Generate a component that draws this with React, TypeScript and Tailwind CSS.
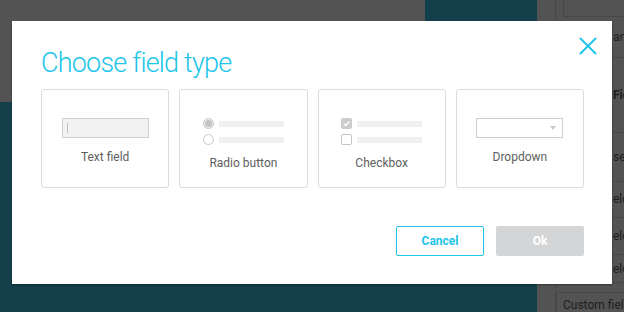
import React from 'react';

const CYAN = 'text-[#20c5e9]';

function TextFieldIcon() {
  return (
    <div className="flex h-[20px] w-[87px] items-center border border-[#cfcfcf] bg-[#f2f2f2] pl-[4px]">
      <div className="h-[10px] w-px bg-[#bdbdbd]" />
    </div>
  );
}

function RadioIcon() {
  return (
    <div className="flex flex-col gap-[5px]">
      <div className="flex items-center gap-[5px]">
        <div className="flex size-[11px] items-center justify-center rounded-full border border-[#c8c8c8] bg-[#ececec]">
          <div className="size-[7px] rounded-full bg-[#c4c4c4]" />
        </div>
        <div className="h-[6px] w-[65px] bg-[#f0f0f0]" />
      </div>
      <div className="flex items-center gap-[5px]">
        <div className="size-[11px] rounded-full border border-[#c8c8c8] bg-white" />
        <div className="h-[6px] w-[65px] bg-[#f0f0f0]" />
      </div>
    </div>
  );
}

function CheckboxIcon() {
  return (
    <div className="flex flex-col gap-[5px]">
      <div className="flex items-center gap-[5px]">
        <div className="flex size-[11px] items-center justify-center rounded-[2px] bg-[#cccccc]">
          <svg width="9" height="9" viewBox="0 0 10 10" fill="none">
            <path d="M2 5.2 L4.2 7.3 L8.2 2.8" stroke="white" strokeWidth="1.6" />
          </svg>
        </div>
        <div className="h-[6px] w-[65px] bg-[#f0f0f0]" />
      </div>
      <div className="flex items-center gap-[5px]">
        <div className="size-[11px] rounded-[2px] border border-[#c4c4c4] bg-white" />
        <div className="h-[6px] w-[65px] bg-[#f0f0f0]" />
      </div>
    </div>
  );
}

function DropdownIcon() {
  return (
    <div className="flex h-[20px] w-[87px] items-center justify-end border border-[#cfcfcf] bg-white pr-[6px]">
      <div className="h-0 w-0 border-x-[3px] border-t-[4px] border-x-transparent border-t-[#c8c8c8]" />
    </div>
  );
}

function Card({ icon, label, gap }: { icon: React.ReactNode; label: string; gap: string }) {
  return (
    <div className={`flex h-[99px] flex-1 flex-col items-center rounded-[3px] border border-[#dcdcdc] pt-[28px] ${gap}`}>
      {icon}
      <span className="text-[12px] leading-[14px] text-[#5e5e5e]">{label}</span>
    </div>
  );
}

function Row({ h, label, bold, boxed }: { h: string; label: string; bold?: boolean; boxed?: boolean }) {
  return (
    <div className={`flex ${h} items-center whitespace-nowrap border-b border-[#484848] ${boxed ? 'border-l pl-[56px]' : 'pl-[57px]'} ${bold ? 'font-bold' : ''}`}>
      {label}
    </div>
  );
}

function Background() {
  return (
    <div className="flex h-[312px] w-[624px]">
      <div className="flex w-[537px] shrink-0 flex-col">
        <div className="flex h-[102px]">
          <div className="w-[425px] bg-[#535353]" />
          <div className="flex-1 bg-[#133f4b]" />
        </div>
        <div className="flex-1 bg-[#133f4b]" />
      </div>
      <div className="flex w-[87px] shrink-0 bg-[#535353]">
        <div className="w-[19px] shrink-0 border-r border-[#484848]" />
        <div className="flex w-[68px] flex-col overflow-hidden text-[12px] leading-[14px] text-[#1e1e1e]">
          <div className="ml-[7px] h-[17px] border-b border-l border-[#484848]" />
          <Row h="h-[42px]" label="any" />
          <Row h="h-[76px]" label="Field" bold />
          <Row h="h-[50px]" label="sec" />
          <Row h="h-[37px]" label="eld" boxed />
          <Row h="h-[38px]" label="eld" boxed />
          <Row h="h-[28px]" label="eld" boxed />
          <div className="mt-[9px] flex flex-1 items-start whitespace-nowrap border-l border-t border-[#484848] pl-[6px] pt-[5px]">
            Custom field
          </div>
        </div>
      </div>
    </div>
  );
}

export default function App() {
  return (
    <div className="relative h-[312px] w-[624px] overflow-hidden font-['Roboto',sans-serif]">
      <Background />
      <div className="absolute left-[12px] top-[21px] flex h-[263px] w-[600px] flex-col bg-white pb-[28px] pl-[29px] pr-[28px] pt-[26px] shadow-[0_1px_2px_rgba(0,0,0,0.35)]">
        <button className="absolute right-[15px] top-[16px]">
          <svg width="18" height="18" viewBox="0 0 18 18" fill="none">
            <path d="M1 1 L17 17 M17 1 L1 17" stroke="#20c5e9" strokeWidth="2" />
          </svg>
        </button>
        <h2 className={`text-[27px] font-light leading-[32px] tracking-[-0.8px] ${CYAN}`}>Choose field type</h2>
        <div className="mt-[10px] flex gap-[10px]">
          <Card icon={<TextFieldIcon />} label="Text field" gap="gap-[12px]" />
          <Card icon={<RadioIcon />} label="Radio button" gap="gap-[11px]" />
          <Card icon={<CheckboxIcon />} label="Checkbox" gap="gap-[11px]" />
          <Card icon={<DropdownIcon />} label="Dropdown" gap="gap-[12px]" />
        </div>
        <div className="mt-auto flex justify-end gap-[12px]">
          <button className={`h-[30px] w-[88px] rounded-[2px] border border-[#20c5e9] text-[12px] font-bold ${CYAN}`}>
            Cancel
          </button>
          <button className="h-[30px] w-[88px] rounded-[2px] bg-[#d4d5d7] text-[12px] font-bold text-white">
            Ok
          </button>
        </div>
      </div>
    </div>
  );
}
